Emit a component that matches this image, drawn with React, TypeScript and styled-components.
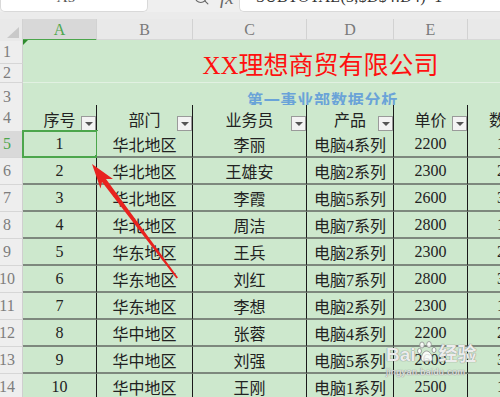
import React from "react";
import styled, { createGlobalStyle } from "styled-components";
import { Search } from "lucide-react";

const COLS = "23px 74px 96px 114px 87px 74px 75px 75px";
const GREEN = "#4ca64c";
const FILL = "#cde8cd";
const SERIF = `"Liberation Serif", "Noto Sans CJK SC", serif`;

const GlobalStyle = createGlobalStyle`
  html, body {
    margin: 0;
    padding: 0;
    background: #ffffff;
  }
`;

const Frame = styled.div`
  position: relative;
  width: 500px;
  height: 397px;
  overflow: hidden;
  background: #eeeeee;
  font-family: ${SERIF};
`;

/* formula bar, cut off at the top of the shot */
const TopBar = styled.div`
  display: flex;
  align-items: flex-end;
  height: 12px;
  overflow: hidden;
  background: #efefef;
`;

const NameBox = styled.div`
  flex: 0 0 148px;
  height: 26px;
  box-sizing: border-box;
  display: flex;
  align-items: center;
  justify-content: center;
  padding: 0 16px 2px 0;
  background: #ffffff;
  border: 1px solid #d9d9d9;
  border-top: none;
  border-radius: 0 0 5px 5px;
  color: #555;
  font-size: 15px;
`;

const ToolIcons = styled.div`
  display: flex;
  align-items: center;
  gap: 10px;
  height: 26px;
  padding: 0 0 3px 45px;
  box-sizing: border-box;
  color: #666;
`;

const Fx = styled.span`
  font-family: "Liberation Serif", serif;
  font-style: italic;
  font-size: 19px;
  color: #666;
`;

const FormulaBox = styled.div`
  flex: 1;
  margin-left: 5px;
  height: 26px;
  box-sizing: border-box;
  display: flex;
  align-items: center;
  padding: 0 0 4px 7px;
  background: #ffffff;
  border: 1px solid #d9d9d9;
  border-top: none;
  border-right: none;
  border-radius: 0 0 0 5px;
  color: #333;
  font-size: 16px;
  letter-spacing: 0.3px;
`;

const Strip = styled.div`
  height: 7px;
  background: #ebebeb;
`;

const Grid = styled.div<{ h: number }>`
  display: grid;
  grid-template-columns: ${COLS};
  height: ${p => p.h}px;
`;

const Corner = styled.div`
  position: relative;
  background: #e9e9e9;
  border-right: 1px solid #d2d2d2;

  &::after {
    content: "";
    position: absolute;
    right: 3px;
    bottom: 3px;
    border-style: solid;
    border-width: 0 0 11px 12px;
    border-color: transparent transparent #c9c9c9 transparent;
  }
`;

const ColHead = styled.div<{ active?: boolean }>`
  display: flex;
  align-items: center;
  justify-content: center;
  box-sizing: border-box;
  background: ${p => (p.active ? "#d8d8d8" : "#e9e9e9")};
  border-right: 1px solid #d2d2d2;
  border-bottom: 2px solid ${p => (p.active ? GREEN : "#d8d8d8")};
  color: ${p => (p.active ? GREEN : "#7a7a7a")};
  font-size: 16px;
  padding-top: 2px;
`;

const RowHead = styled.div<{ active?: boolean; h?: number }>`
  display: flex;
  align-items: center;
  justify-content: center;
  box-sizing: border-box;
  height: ${p => (p.h ? `${p.h}px` : "auto")};
  padding-right: 8px;
  background: ${p => (p.active ? "#d9d9d9" : "#eeeeee")};
  border-right: 1px solid #cfcfcf;
  border-bottom: 1px solid #d6d6d6;
  color: ${p => (p.active ? GREEN : "#7d7d7d")};
  font-size: 16px;
  line-height: 1;
  white-space: nowrap;
`;

const RowHeadStack = styled.div`
  display: flex;
  flex-direction: column;
`;

const TitleCell = styled.div`
  position: relative;
  grid-column: 2 / -1;
  display: flex;
  align-items: center;
  justify-content: center;
  padding-top: 4px;
  background: ${FILL};
  border-bottom: 1px solid #e2f1e2;
  color: #ff1010;
  font-size: 25px;

  &::before {
    content: "";
    position: absolute;
    left: 0;
    top: 0;
    border-style: solid;
    border-width: 5px 5px 0 0;
    border-color: #2e8b2e transparent transparent transparent;
  }
`;

const SubtitleCell = styled.div`
  grid-column: 2 / -1;
  display: flex;
  align-items: center;
  justify-content: center;
  padding: 4px 0 0 4px;
  background: ${FILL};
  border-bottom: 1px solid #1a1a1a;
  color: #6aa3d8;
  font-size: 16px;
  font-weight: bold;
  letter-spacing: 0.8px;
`;

const Cell = styled.div<{ head?: boolean }>`
  position: relative;
  display: flex;
  align-items: center;
  justify-content: center;
  box-sizing: border-box;
  padding-top: ${p => (p.head ? "2px" : "1px")};
  background: ${FILL};
  border-right: 1px solid #1a1a1a;
  border-bottom: ${p => (p.head ? "1px solid #1a1a1a" : "2px solid #7d887d")};
  color: #222;
  font-size: 16px;
  white-space: nowrap;
`;

const FilterButton = styled.span`
  position: absolute;
  right: 0;
  bottom: 0;
  width: 15px;
  height: 15px;
  box-sizing: border-box;
  background: #f3f3f3;
  border: 1px solid #9a9a9a;

  &::after {
    content: "";
    position: absolute;
    left: 3px;
    top: 5px;
    border-style: solid;
    border-width: 4px 4px 0 4px;
    border-color: #555 transparent transparent transparent;
  }
`;

const Selection = styled.span`
  position: absolute;
  inset: -1px -2px -2px -1px;
  border: 2px solid ${GREEN};
  pointer-events: none;

  &::after {
    content: "";
    position: absolute;
    right: -4px;
    bottom: -4px;
    width: 5px;
    height: 5px;
    background: ${GREEN};
  }
`;

const Overlay = styled.svg`
  position: absolute;
  left: 0;
  top: 0;
  pointer-events: none;
`;

const Watermark = styled.div`
  position: absolute;
  left: 386px;
  top: 340px;
  display: flex;
  flex-direction: column;
  align-items: flex-start;
  color: rgba(255, 255, 255, 0.85);
  text-shadow: 0 0 1px #8a8a8a, 0 0 1px #8a8a8a;
  pointer-events: none;
`;

const MarkLine = styled.div`
  display: flex;
  align-items: flex-end;
  font-family: "Liberation Sans", "Noto Sans CJK SC", sans-serif;
  font-size: 19px;
  font-weight: bold;
  line-height: 1;
`;

const MarkUrl = styled.div`
  margin-top: 3px;
  font-family: "Liberation Sans", sans-serif;
  font-size: 9px;
  letter-spacing: 0.4px;
`;

const headers = ["序号", "部门", "业务员", "产品", "单价", "数量"];

const rows = [
  ["1", "华北地区", "李丽", "电脑4系列", "2200", "15"],
  ["2", "华北地区", "王雄安", "电脑2系列", "2300", "20"],
  ["3", "华北地区", "李霞", "电脑5系列", "2600", "30"],
  ["4", "华北地区", "周洁", "电脑7系列", "2800", "18"],
  ["5", "华东地区", "王兵", "电脑2系列", "2300", "25"],
  ["6", "华东地区", "刘红", "电脑7系列", "2800", "32"],
  ["7", "华东地区", "李想", "电脑2系列", "2300", "16"],
  ["8", "华中地区", "张蓉", "电脑4系列", "2200", "22"],
  ["9", "华中地区", "刘强", "电脑5系列", "2600", "35"],
  ["10", "华中地区", "王刚", "电脑1系列", "2500", "14"]
];

const Paw: React.FC = () => (
  <svg width="20" height="24" viewBox="0 0 20 22" style={{ margin: "0 2px 0 1px" }}>
    <g fill="rgba(255,255,255,0.85)" stroke="#8a8a8a" strokeWidth="0.8">
      <ellipse cx="5" cy="4" rx="2.3" ry="3" />
      <ellipse cx="12" cy="3.5" rx="2.3" ry="3" />
      <ellipse cx="2.5" cy="10" rx="2" ry="2.6" />
      <ellipse cx="17" cy="9" rx="2" ry="2.6" />
      <path d="M9.5 10 C6 10 3.5 16 4.5 19 C5.5 21.5 8 20 10 20 C12 20 15 21.5 15.5 18.5 C16 15 13 10 9.5 10 Z" />
    </g>
  </svg>
);

const Arrow: React.FC = () => (
  <Overlay width="500" height="397" viewBox="0 0 500 397">
    <polygon
      fill="#e8231f"
      points="92,164 113,179 106,179 178,277.5 176.5,278.6 102,182 100.5,188.5"
    />
  </Overlay>
);

export default function App() {
  return (
    <>
      <GlobalStyle />
      <Frame>
        <TopBar>
          <NameBox>A5</NameBox>
          <ToolIcons>
            <Search size={17} strokeWidth={1.6} />
            <Fx>fx</Fx>
          </ToolIcons>
          <FormulaBox>=SUBTOTAL(3,$D$4:D4)*1</FormulaBox>
        </TopBar>
        <Strip />

        <Grid h={21}>
          <Corner />
          {["A", "B", "C", "D", "E", "F", "G"].map(l => (
            <ColHead key={l} active={l === "A"}>
              {l}
            </ColHead>
          ))}
        </Grid>

        <Grid h={43}>
          <RowHeadStack>
            <RowHead h={24}>1</RowHead>
            <RowHead h={19}>2</RowHead>
          </RowHeadStack>
          <TitleCell>XX理想商贸有限公司</TitleCell>
        </Grid>

        <Grid h={22}>
          <RowHead>3</RowHead>
          <SubtitleCell>第一事业部数据分析</SubtitleCell>
        </Grid>

        <Grid h={26}>
          <RowHead>4</RowHead>
          {headers.map(h => (
            <Cell head key={h}>
              {h}
              <FilterButton />
            </Cell>
          ))}
          <Cell head />
        </Grid>

        {rows.map((r, i) => (
          <Grid h={27} key={r[0]}>
            <RowHead active={i === 0}>{i + 5}</RowHead>
            {r.map((v, j) => (
              <Cell key={j}>
                {v}
                {i === 0 && j === 0 && <Selection />}
              </Cell>
            ))}
            <Cell />
          </Grid>
        ))}

        <Arrow />
        <Watermark>
          <MarkLine>
            Bai
            <Paw />
            经验
          </MarkLine>
          <MarkUrl>jingyan.baidu.com</MarkUrl>
        </Watermark>
      </Frame>
    </>
  );
}
